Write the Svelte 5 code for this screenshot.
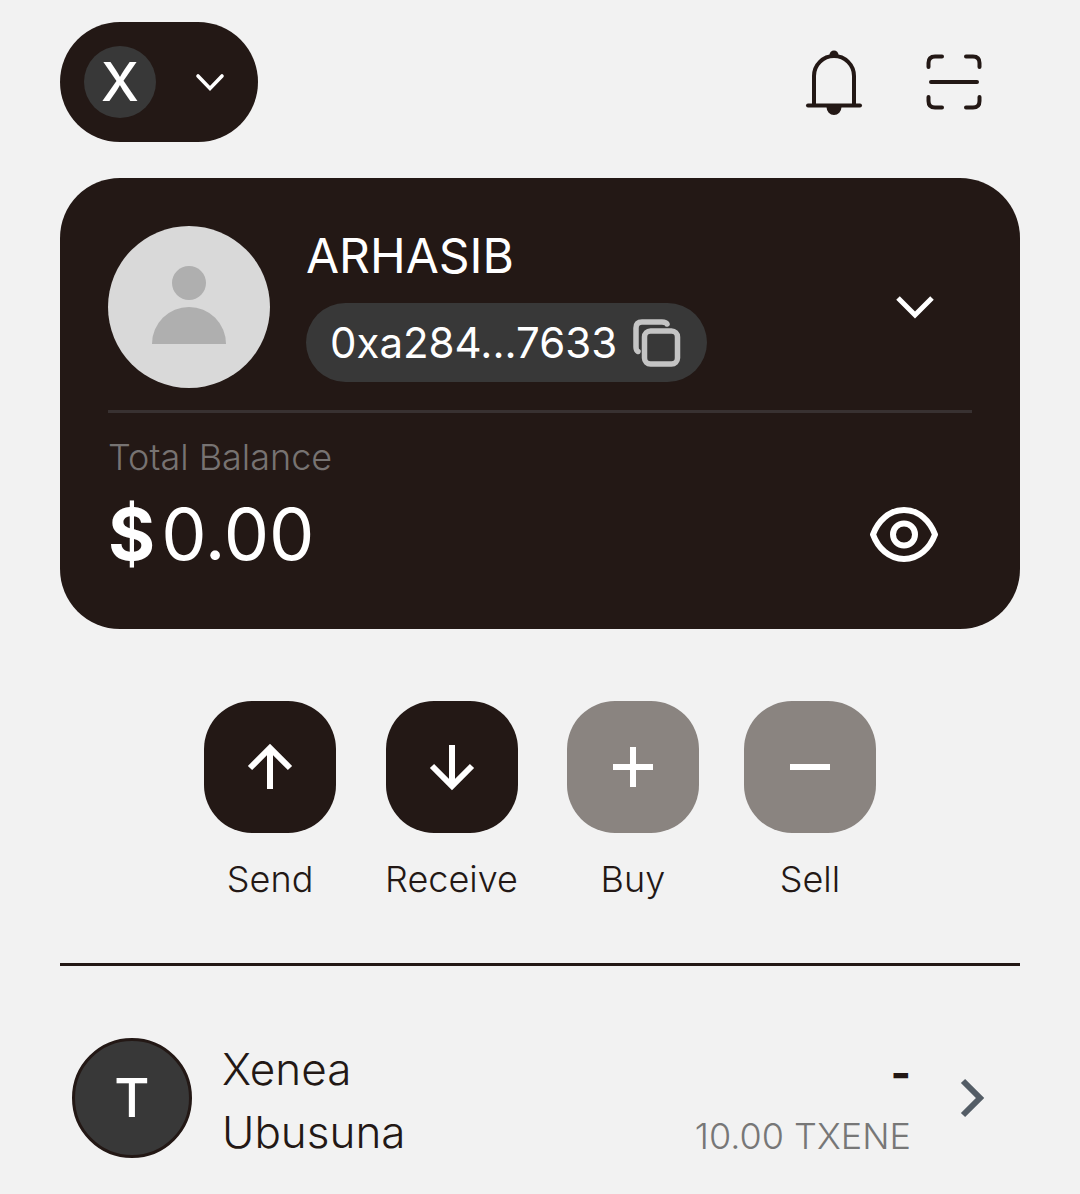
<script>
	let networkOpen = false;
	let accountOpen = false;
	let balanceVisible = true;

	const account = {
		name: "ARHASIB",
		address: "0xa284...7633",
		balance: "0.00",
	};

	const actions = [
		{ label: "Send", icon: "M24 46V5M4 25 24 5l20 20", disabled: false },
		{ label: "Receive", icon: "M24 2v41M4 23l20 20 20-20", disabled: false },
		{ label: "Buy", icon: "M24 4v40M4 24h40", disabled: true },
		{ label: "Sell", icon: "M4 24h40", disabled: true },
	];

	const tokens = [
		{ letter: "T", name: "Xenea Ubusuna", value: "-", amount: "10.00 TXENE" },
	];
</script>

<main class="wallet">
	<header class="topbar">
		<button
			class="network"
			aria-label="Network"
			aria-expanded={networkOpen}
			on:click={() => (networkOpen = !networkOpen)}
		>
			<span class="network-logo">X</span>
			<svg width="30" height="20" viewBox="0 0 30 20">
				<path d="M3 4 15 16.500 27 4" stroke-width="3.600" stroke-linecap="round" />
			</svg>
		</button>
		<div class="tools">
			<button class="tool" aria-label="Notifications">
				<svg width="58" height="68" viewBox="0 0 58 68">
					<path d="M9 56V28a20 20 0 0 1 40 0v28" stroke-width="4" />
					<path d="M3 57.500h52" stroke-width="4" stroke-linecap="round" />
					<path class="solid" d="M24.500 7a4.500 4.500 0 0 1 9 0zM21.500 59h15a7.500 8 0 0 1-15 0z" />
				</svg>
			</button>
			<button class="tool" aria-label="Scan">
				<svg width="58" height="58" viewBox="0 0 58 58">
					<path
						d="M3.500 14V10q0-6.500 6.500-6.500h7M41 3.500h7q6.500 0 6.500 6.500v4M3.500 44v4q0 6.500 6.500 6.500h7M41 54.500h7q6.500 0 6.500-6.500v-4M6 29h46"
						stroke-width="4"
						stroke-linecap="round"
					/>
				</svg>
			</button>
		</div>
	</header>

	<section class="card">
		<div class="account">
			<svg class="avatar" viewBox="0 0 162 162">
				<circle cx="81" cy="57" r="17" />
				<path d="M44 118a37 37 0 0 1 74 0z" />
			</svg>
			<div class="identity">
				<h1>{account.name}</h1>
				<button class="address" aria-label="Copy address {account.address}">
					<span>{account.address}</span>
					<svg width="48" height="48" viewBox="0 0 48 48">
						<rect x="11.500" y="12" width="33" height="33" rx="6" stroke-width="5.500" />
						<path
							d="M5 32.500Q3 31.500 3 28V9q0-6 6-6h20q4 0 5 2"
							stroke-width="5.500"
							stroke-linecap="round"
						/>
					</svg>
				</button>
			</div>
			<button
				class="switch"
				aria-label="Switch account"
				aria-expanded={accountOpen}
				on:click={() => (accountOpen = !accountOpen)}
			>
				<svg width="38" height="26" viewBox="0 0 38 26">
					<path d="m2 4 17 17L36 4" stroke-width="5" />
				</svg>
			</button>
		</div>
		<div class="label">Total Balance</div>
		<div class="balance">
			<div class="amount">
				<span class="currency">$</span>
				<span>{balanceVisible ? account.balance : "****"}</span>
			</div>
			<button
				class="reveal"
				aria-label="Toggle balance"
				on:click={() => (balanceVisible = !balanceVisible)}
			>
				<svg width="68" height="56" viewBox="0 0 68 56">
					<path
						d="M3 28.500C8 15 19 4 34 4S60 15 65 28.500C60 42 49 53 34 53S8 42 3 28.500z"
						stroke-width="6"
						stroke-linejoin="round"
					/>
					<circle cx="34" cy="28.500" r="11" stroke-width="6" />
				</svg>
			</button>
		</div>
	</section>

	<nav class="actions">
		{#each actions as action}
			<button class="action" disabled={action.disabled}>
				<span class="tile">
					<svg width="48" height="48" viewBox="0 0 48 48">
						<path d={action.icon} stroke-width="6" />
					</svg>
				</span>
				<span class="action-label">{action.label}</span>
			</button>
		{/each}
	</nav>

	<section class="tokens">
		{#each tokens as token}
			<button class="token">
				<span class="token-logo">{token.letter}</span>
				<span class="token-name">{token.name}</span>
				<span class="holding">
					<span class="value">{token.value}</span>
					<span class="quantity">{token.amount}</span>
				</span>
				<svg class="go" width="26" height="40" viewBox="0 0 26 40">
					<path d="m4 3 17 17L4 37" stroke-width="6" />
				</svg>
			</button>
		{/each}
	</section>
</main>

<style>
	:global(body) {
		margin: 0;
		background: #f2f2f2;
	}

	.wallet {
		padding: 22px 60px 36px;
		color: #231815;
		font-family: Inter, "Liberation Sans", sans-serif;
		font-weight: 300;
	}

	button {
		padding: 0;
		border: none;
		background: none;
		color: inherit;
		font: inherit;
		cursor: pointer;
	}

	svg {
		display: block;
		flex: none;
		fill: none;
		stroke: currentColor;
	}

	.topbar {
		display: flex;
		align-items: center;
		justify-content: space-between;
	}

	.network {
		display: flex;
		align-items: center;
		gap: 39px;
		height: 120px;
		padding: 0 33px 0 24px;
		border-radius: 60px;
		background: #231815;
		color: #fff;
	}

	.network-logo {
		width: 72px;
		border-radius: 50%;
		background: #383838;
		font-size: 54px;
		font-weight: 500;
		line-height: 72px;
	}

	.tools {
		display: flex;
		align-items: center;
		gap: 62px;
		padding-right: 37px;
	}

	.solid {
		fill: currentColor;
		stroke: none;
	}

	.card {
		margin-top: 36px;
		padding: 48px;
		border-radius: 60px;
		background: #231815;
		color: #fff;
	}

	.account {
		display: flex;
		align-items: center;
		padding-bottom: 22px;
		border-bottom: 3px solid #383131;
	}

	.avatar {
		width: 162px;
		height: 162px;
		border-radius: 50%;
		background: #d9d9d9;
		fill: #afafaf;
		stroke: none;
	}

	.identity {
		flex: 1;
		margin-left: 36px;
	}

	h1 {
		margin: 0 0 23px;
		font-size: 48px;
		font-weight: 400;
		line-height: 48px;
	}

	.address {
		display: flex;
		align-items: center;
		gap: 16px;
		height: 79px;
		padding: 0 26px 0 24px;
		border-radius: 40px;
		background: #383838;
		font-size: 42px;
		font-weight: 400;
	}

	.address svg {
		color: #c4c4c4;
	}

	.switch {
		margin-right: 38px;
	}

	.label {
		margin-top: 20px;
		color: #777372;
		font-size: 36px;
		line-height: 48px;
	}

	.balance {
		display: flex;
		align-items: center;
		justify-content: space-between;
		margin-top: 6px;
	}

	.amount {
		display: flex;
		gap: 6px;
		font-size: 72px;
		font-weight: 400;
		line-height: 94px;
	}

	.currency {
		font-weight: 700;
	}

	.reveal {
		margin-right: 34px;
	}

	.actions {
		display: flex;
		justify-content: center;
		gap: 45px;
		padding: 72px 0 60px;
		border-bottom: 3px solid #231815;
	}

	.action {
		display: flex;
		flex-direction: column;
		align-items: center;
		gap: 23px;
		font-size: 36px;
		line-height: 47px;
	}

	.action-label {
		padding: 0 4px;
	}

	.tile {
		display: grid;
		place-items: center;
		width: 132px;
		height: 132px;
		border-radius: 48px;
		background: #231815;
		color: #fff;
	}

	.action:disabled {
		cursor: default;
	}

	.action:disabled .tile {
		background: #8a8480;
	}

	.tokens {
		padding-top: 72px;
	}

	.token {
		display: flex;
		align-items: flex-start;
		width: 100%;
		padding: 0 35px 0 12px;
		line-height: 63px;
	}

	.token-logo {
		flex: none;
		box-sizing: border-box;
		width: 120px;
		border: 3px solid #231815;
		border-radius: 50%;
		background: #383838;
		color: #fff;
		font-size: 54px;
		font-weight: 500;
		line-height: 114px;
	}

	.token-name {
		width: 240px;
		margin-left: 30px;
		font-size: 44px;
		text-align: left;
	}

	.holding {
		display: flex;
		flex-direction: column;
		margin: 4px 48px 0 auto;
		text-align: right;
	}

	.value {
		font-size: 44px;
		font-weight: 700;
	}

	.quantity {
		color: #777;
		font-size: 36px;
	}

	.go {
		margin-top: 40px;
		color: #545d66;
	}
</style>
